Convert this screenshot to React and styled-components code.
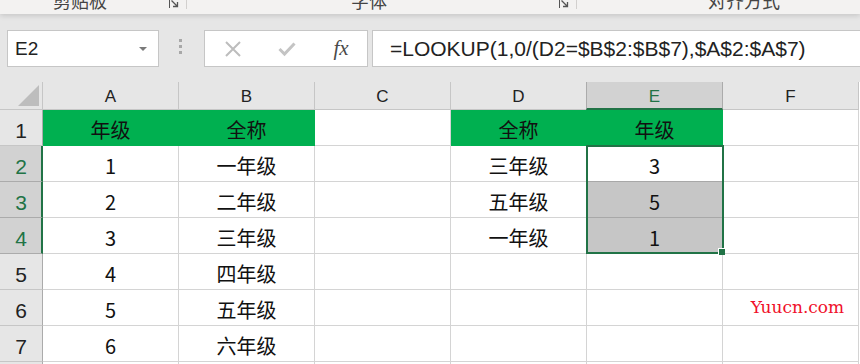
import React from "react";
import styled, { createGlobalStyle } from "styled-components";

const GREEN = "#00b050";
const DARK_GREEN = "#217346";

const cols = ["A", "B", "C", "D", "E", "F"];
const rows = [
  ["年级", "全称", "", "全称", "年级", ""],
  ["1", "一年级", "", "三年级", "3", ""],
  ["2", "二年级", "", "五年级", "5", ""],
  ["3", "三年级", "", "一年级", "1", ""],
  ["4", "四年级", "", "", "", ""],
  ["5", "五年级", "", "", "", ""],
  ["6", "六年级", "", "", "", ""],
  ["", "", "", "", "", ""],
];

const cellKind = (r, c) => {
  if (r === 0 && c !== 2 && c !== 5) return "green";
  if (c === 4 && (r === 2 || r === 3)) return "grey";
  if (c === 4 && r === 1) return "active";
  return "plain";
};

const App = () => {
  return (
    <Page>
      <Global />
      <Ribbon>
        <Group $w={187} $label={53}>
          <GroupLabel>剪贴板</GroupLabel>
          <Launcher />
        </Group>
        <Group $w={390} $label={164}>
          <GroupLabel>字体</GroupLabel>
          <Launcher />
        </Group>
        <Group $w={283} $label={131} $last>
          <GroupLabel>对齐方式</GroupLabel>
        </Group>
      </Ribbon>

      <FormulaBar>
        <NameBox>
          <span>E2</span>
          <Caret />
        </NameBox>
        <Grip>
          <i />
          <i />
          <i />
        </Grip>
        <FxBox>
          <FxButton>
            <svg width="18" height="18" viewBox="0 0 18 18">
              <path d="M2 2 L16 16 M16 2 L2 16" stroke="#bdbdbd" strokeWidth="2" fill="none" />
            </svg>
          </FxButton>
          <FxButton>
            <svg width="18" height="16" viewBox="0 0 18 16">
              <path d="M1.5 8 L6.5 13 L16.5 2.5" stroke="#c4c4c4" strokeWidth="3" fill="none" />
            </svg>
          </FxButton>
          <FxButton $dark>fx</FxButton>
        </FxBox>
        <FormulaInput>=LOOKUP(1,0/(D2=$B$2:$B$7),$A$2:$A$7)</FormulaInput>
      </FormulaBar>

      <Sheet>
        <Corner>
          <svg width="21" height="21" viewBox="0 0 21 21">
            <path d="M21 0 L21 21 L0 21 Z" fill="#bdbdbd" />
          </svg>
        </Corner>
        {cols.map((c, i) => (
          <ColHead key={c} $c={i} $sel={c === "E"}>
            {c}
          </ColHead>
        ))}
        {rows.map((row, r) => (
          <React.Fragment key={r}>
            <RowHead $r={r} $sel={r >= 1 && r <= 3}>
              {r + 1}
            </RowHead>
            {row.map((v, c) => (
              <Cell key={c} $r={r} $c={c} $kind={cellKind(r, c)}>
                {r === 5 && c === 5 ? <Watermark>Yuucn.com</Watermark> : v}
              </Cell>
            ))}
          </React.Fragment>
        ))}
        <Selection>
          <FillHandle />
        </Selection>
      </Sheet>
    </Page>
  );
};

const Launcher = () => (
  <LauncherBox>
    <svg width="10" height="10" viewBox="0 0 10 10">
      <path d="M0.5 10 V0.5 H9.5" stroke="#555" strokeWidth="1" fill="none" />
      <path d="M2.5 2.5 L8.5 8.5 M4 8.5 H8.5 V4" stroke="#555" strokeWidth="1.3" fill="none" />
    </svg>
  </LauncherBox>
);

export default App;

const Global = createGlobalStyle`
  html, body {
    margin: 0;
    padding: 0;
    background: #e6e6e6;
    overflow: hidden;
  }
`;

const Page = styled.div`
  width: 860px;
  height: 364px;
  overflow: hidden;
  font-family: "Liberation Sans", "Noto Sans CJK SC", sans-serif;
  background: #e6e6e6;
`;

const Ribbon = styled.div`
  height: 14px;
  display: flex;
  background: #f3f2f1;
  overflow: hidden;
  position: relative;
  z-index: 1;
  box-shadow: 0 2px 5px rgba(0, 0, 0, 0.13);
`;

const Group = styled.div`
  width: ${(p) => p.$w}px;
  flex-shrink: 0;
  display: flex;
  align-items: flex-start;
  padding-left: ${(p) => p.$label}px;
  box-sizing: border-box;
  border-right: ${(p) => (p.$last ? "none" : "1px solid #d2d0ce")};
  height: 9px;
`;

const GroupLabel = styled.div`
  font-family: "Noto Sans CJK SC", sans-serif;
  font-size: 18px;
  line-height: 18px;
  margin-top: -9px;
  color: #444;
`;

const LauncherBox = styled.div`
  margin-left: auto;
  margin-right: 7px;
  margin-top: -2px;
  display: flex;
`;

const FormulaBar = styled.div`
  height: 68px;
  display: flex;
  align-items: flex-start;
  padding: 16px 0 0 7px;
  box-sizing: border-box;
  background: #e6e6e6;
`;

const NameBox = styled.div`
  width: 152px;
  height: 37px;
  box-sizing: border-box;
  background: #fff;
  border: 1px solid #c6c6c6;
  display: flex;
  align-items: center;
  padding: 0 11px 0 7px;
  font-size: 19px;
  color: #222;
  span {
    flex: 1;
  }
`;

const Caret = styled.div`
  width: 0;
  height: 0;
  border-left: 4px solid transparent;
  border-right: 4px solid transparent;
  border-top: 4px solid #7a7a7a;
`;

const Grip = styled.div`
  width: 4px;
  margin: 9px 21px 0 20px;
  display: flex;
  flex-direction: column;
  gap: 3px;
  i {
    display: block;
    width: 3px;
    height: 3px;
    background: #a8a8a8;
  }
`;

const FxBox = styled.div`
  width: 164px;
  height: 37px;
  box-sizing: border-box;
  background: #fff;
  border: 1px solid #c6c6c6;
  display: flex;
  align-items: center;
  padding-left: 18px;
  gap: 34px;
`;

const FxButton = styled.div`
  width: 20px;
  display: flex;
  justify-content: center;
  align-items: center;
  font-family: "Liberation Serif", serif;
  font-style: italic;
  font-size: 21px;
  color: ${(p) => (p.$dark ? "#4a4a4a" : "#bdbdbd")};
`;

const FormulaInput = styled.div`
  flex: 1;
  height: 37px;
  margin-left: 4px;
  box-sizing: border-box;
  background: #fff;
  border: 1px solid #c6c6c6;
  border-right: none;
  display: flex;
  align-items: center;
  padding-left: 17px;
  font-size: 21px;
  color: #222;
  white-space: nowrap;
`;

const Sheet = styled.div`
  display: grid;
  grid-template-columns: 43px repeat(6, 136px);
  grid-template-rows: 28px repeat(8, 36px);
  background: #fff;
  height: 282px;
  overflow: hidden;
`;

const Corner = styled.div`
  grid-row: 1;
  grid-column: 1;
  background: #e6e6e6;
  border-right: 1px solid #c6c6c6;
  border-bottom: 1px solid #c6c6c6;
  display: flex;
  justify-content: flex-end;
  align-items: flex-end;
  padding: 0 3px 3px 0;
`;

const ColHead = styled.div`
  grid-row: 1;
  grid-column: ${(p) => p.$c + 2};
  background: ${(p) => (p.$sel ? "#d2d2d2" : "#e6e6e6")};
  color: ${(p) => (p.$sel ? DARK_GREEN : "#222")};
  border-right: 1px solid ${(p) => (p.$sel ? "#ababab" : "#c6c6c6")};
  border-left: ${(p) => (p.$sel ? "1px solid #ababab" : "none")};
  margin-left: ${(p) => (p.$sel ? "-1px" : "0")};
  border-bottom: ${(p) => (p.$sel ? `2px solid ${DARK_GREEN}` : "1px solid #c6c6c6")};
  display: flex;
  align-items: center;
  justify-content: center;
  padding-top: 3px;
  box-sizing: border-box;
  font-size: 17px;
`;

const RowHead = styled.div`
  grid-row: ${(p) => p.$r + 2};
  grid-column: 1;
  background: ${(p) => (p.$sel ? "#d2d2d2" : "#e6e6e6")};
  color: ${(p) => (p.$sel ? DARK_GREEN : "#222")};
  border-right: ${(p) => (p.$sel ? `2px solid ${DARK_GREEN}` : "1px solid #ababab")};
  border-bottom: 1px solid ${(p) => (p.$sel ? "#ababab" : "#c6c6c6")};
  display: flex;
  align-items: flex-end;
  justify-content: center;
  padding: 0 0 2px ${(p) => (p.$sel ? "1px" : "0")};
  box-sizing: border-box;
  font-size: 21px;
`;

const kindBg = {
  green: GREEN,
  grey: "#c6c6c6",
  active: "#fff",
  plain: "#fff",
};

const Cell = styled.div`
  grid-row: ${(p) => p.$r + 2};
  grid-column: ${(p) => p.$c + 2};
  background: ${(p) => kindBg[p.$kind]};
  border-right: 1px solid ${(p) => (p.$kind === "green" ? GREEN : "#d4d4d4")};
  border-bottom: 1px solid
    ${(p) =>
      p.$kind === "green" ? GREEN : p.$kind === "plain" ? "#d4d4d4" : "#a8a8a8"};
  display: flex;
  align-items: center;
  justify-content: center;
  padding-top: 3px;
  box-sizing: border-box;
  font-family: "Noto Sans CJK SC", sans-serif;
  font-size: 20px;
  color: #111;
  white-space: nowrap;
`;

const Watermark = styled.span`
  font-family: "DejaVu Serif", "Liberation Serif", serif;
  font-size: 17px;
  color: #f0102a;
  margin: -4px 0 0 14px;
`;

const Selection = styled.div`
  grid-column: 6;
  grid-row: 3 / 6;
  margin: -1px -1px 0 -1px;
  border: 2px solid ${DARK_GREEN};
  box-sizing: border-box;
  position: relative;
  pointer-events: none;
`;

const FillHandle = styled.div`
  position: absolute;
  right: -3px;
  bottom: -3px;
  width: 6px;
  height: 6px;
  background: ${DARK_GREEN};
  box-shadow: -1px -1px 0 0 #fff;
`;
